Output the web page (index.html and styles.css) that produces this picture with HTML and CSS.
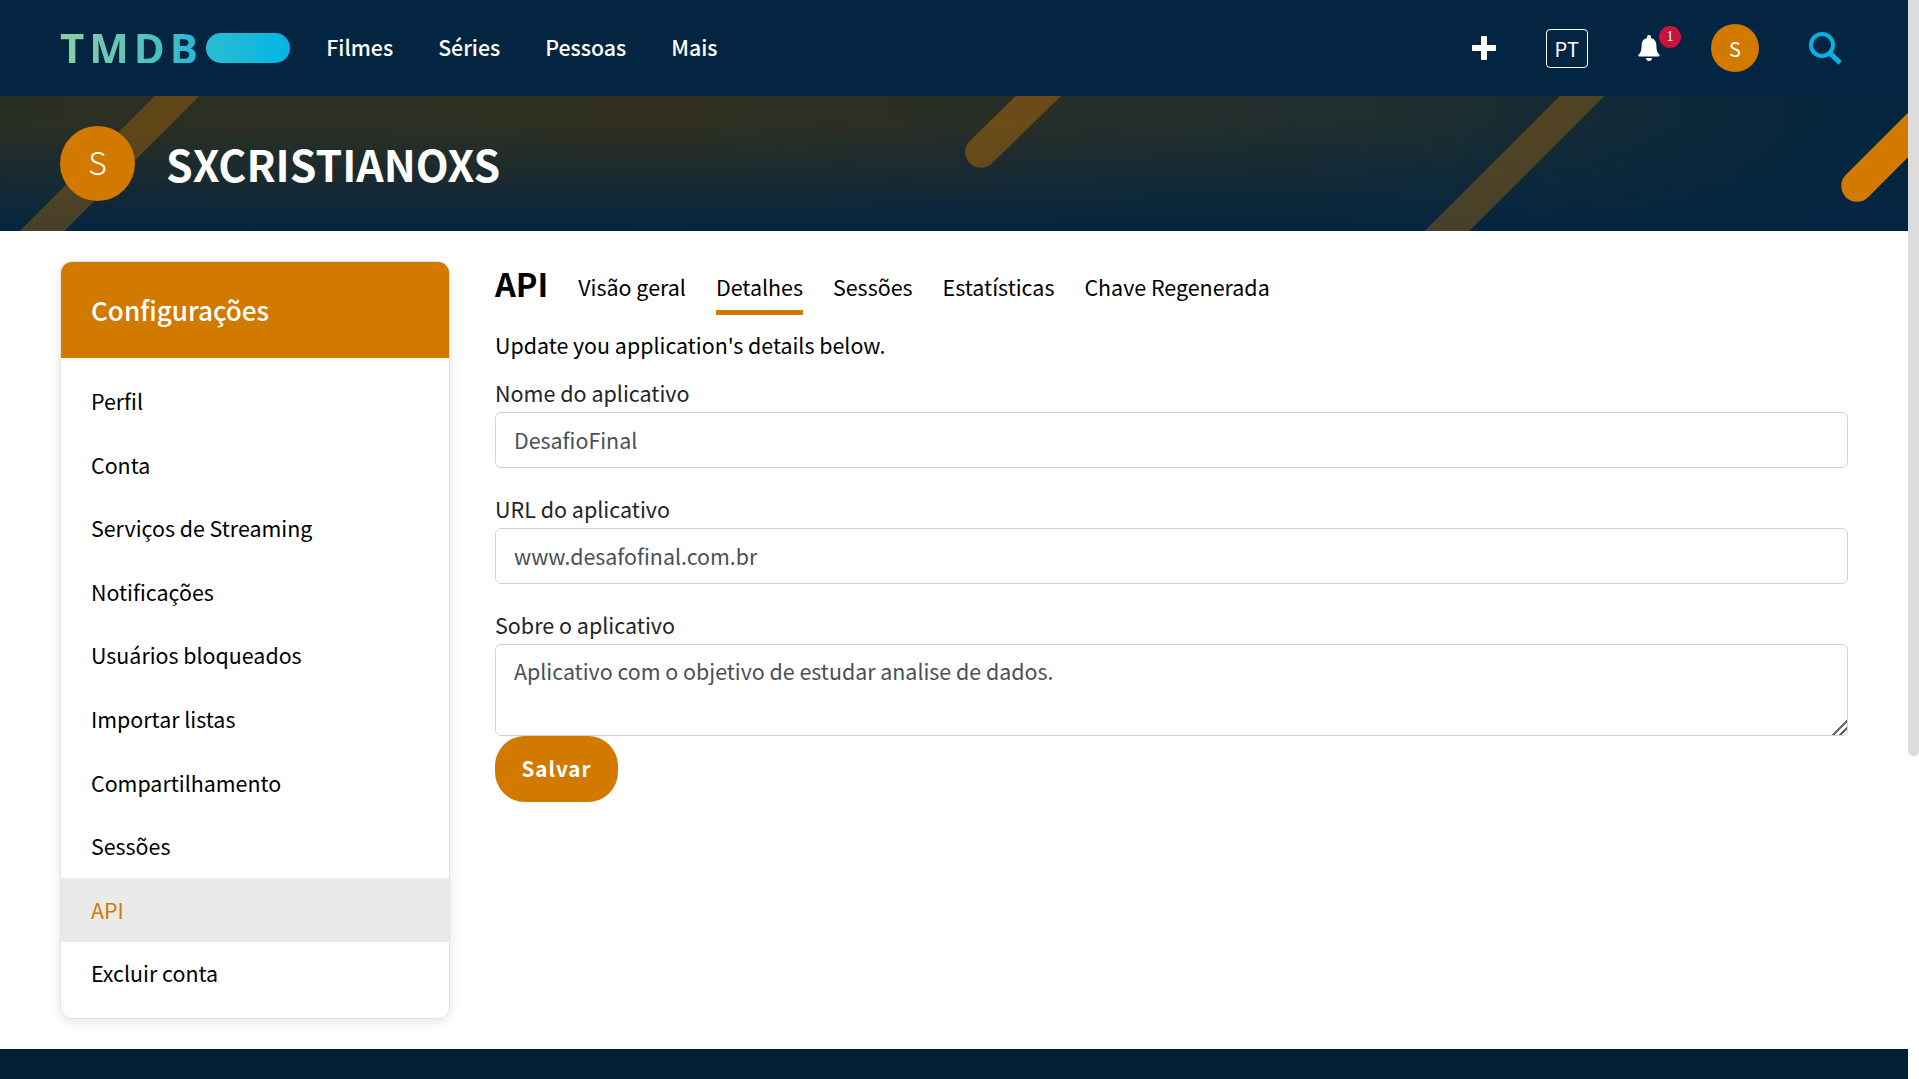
FILE: index.html
```html
<!DOCTYPE html>
<html lang="pt">
<head>
<meta charset="utf-8">
<title>TMDB - API</title>
<link rel="stylesheet" href="styles.css">
</head>
<body>
<div class="window">
  <div class="page">
    <header class="topbar">
      <div class="topbar-left">
        <a class="logo"><span class="logo-text">TMDB</span><span class="logo-pill"></span></a>
        <nav class="main-nav">
          <a>Filmes</a><a>Séries</a><a>Pessoas</a><a>Mais</a>
        </nav>
      </div>
      <div class="topbar-right">
        <svg class="icon-plus" viewBox="0 0 24 24"><path d="M10 0h4a1 1 0 0 1 1 1v8h8a1 1 0 0 1 1 1v4a1 1 0 0 1-1 1h-8v8a1 1 0 0 1-1 1h-4a1 1 0 0 1-1-1v-8H1a1 1 0 0 1-1-1v-4a1 1 0 0 1 1-1h8V1a1 1 0 0 1 1-1z" fill="#fff"/></svg>
        <span class="lang">PT</span>
        <span class="bell-wrap">
          <svg class="icon-bell" viewBox="0 0 22 26"><path d="M11 0c1.200 0 2 .9 2 2v1c3.600.8 5.400 3.800 5.400 7.500 0 5 1 7 3 9.200.6.700.2 1.800-.8 1.800H1.400c-1 0-1.400-1.100-.8-1.800 2-2.200 3-4.200 3-9.200C3.600 6.800 5.400 3.800 9 3V2c0-1.100.8-2 2-2z" fill="#fff"/><path d="M8 23h6c0 1.700-1.300 3-3 3s-3-1.300-3-3z" fill="#fff"/></svg>
          <span class="badge">1</span>
        </span>
        <span class="avatar-small">S</span>
        <svg class="icon-search" viewBox="0 0 33 33"><circle cx="13" cy="13" r="11" fill="none" stroke="#01b4e4" stroke-width="4"/><path d="M21 21L31 31" stroke="#01b4e4" stroke-width="5"/></svg>
      </div>
    </header>

    <section class="hero">
      <svg class="hero-art" viewBox="0 0 1908 135" preserveAspectRatio="none">
        <path class="stripe-a" d="M200 -23L19 158"/>
        <path class="stripe-b" d="M1062 -23L981 56"/>
        <path class="stripe-a" d="M1605 -23L1424 158"/>
        <path class="stripe-c" d="M1960 -13L1857 90"/>
      </svg>
      <div class="hero-content">
        <span class="avatar-large">S</span>
        <h1 class="username">SXCRISTIANOXS</h1>
      </div>
    </section>

    <main class="layout">
      <aside class="side-card">
        <h2 class="side-title">Configurações</h2>
        <ul class="side-list">
          <li>Perfil</li>
          <li>Conta</li>
          <li>Serviços de Streaming</li>
          <li>Notificações</li>
          <li>Usuários bloqueados</li>
          <li>Importar listas</li>
          <li>Compartilhamento</li>
          <li>Sessões</li>
          <li class="active">API</li>
          <li>Excluir conta</li>
        </ul>
      </aside>

      <section class="content">
        <div class="tabs">
          <h2 class="tabs-title">API</h2>
          <a class="tab">Visão geral</a>
          <a class="tab current">Detalhes</a>
          <a class="tab">Sessões</a>
          <a class="tab">Estatísticas</a>
          <a class="tab">Chave Regenerada</a>
        </div>
        <p class="intro">Update you application's details below.</p>
        <form class="form">
          <label class="field">
            <span class="field-label">Nome do aplicativo</span>
            <input class="control" type="text" value="DesafioFinal">
          </label>
          <label class="field">
            <span class="field-label">URL do aplicativo</span>
            <input class="control" type="text" value="www.desafofinal.com.br">
          </label>
          <label class="field field-area">
            <span class="field-label">Sobre o aplicativo</span>
            <textarea class="control area">Aplicativo com o objetivo de estudar analise de dados.</textarea>
          </label>
          <button class="save" type="button">Salvar</button>
        </form>
      </section>
    </main>

    <footer class="footer"></footer>
  </div>
  <div class="scrollbar"><div class="thumb"></div></div>
</div>
</body>
</html>
```

FILE: styles.css
```css
* { box-sizing: border-box; }
html, body { margin: 0; height: 100%; overflow: hidden; }
body {
  font-family: "Noto Sans CJK SC", "Noto Sans", sans-serif;
  color: #000;
  background: #fff;
}
.window { display: flex; height: 1079px; }
.page { flex: 1; min-width: 0; display: flex; flex-direction: column; }

.scrollbar { width: 11px; background: #fff; }
.thumb { height: 756px; background: #dcdcdc; border-radius: 0 0 5px 5px; }

.topbar {
  height: 96px;
  flex: none;
  background: #032541;
  display: flex;
  align-items: center;
  justify-content: space-between;
  padding: 0 66px 0 60px;
}
.topbar-left { display: flex; align-items: center; }
.logo { display: flex; align-items: center; gap: 3.400px; }
.logo-text {
  font-family: "Open Sans", sans-serif;
  font-weight: 700;
  font-size: 42px;
  line-height: 30px;
  letter-spacing: 4.900px;
  background: linear-gradient(90deg, #90cea1, #3cbec9 80%, #1eb6d8);
  -webkit-background-clip: text;
  background-clip: text;
  color: transparent;
}
.logo-pill {
  width: 84px;
  height: 30px;
  border-radius: 15px;
  background: linear-gradient(90deg, #2bbdd0, #02b5e6);
}
.main-nav { display: flex; gap: 45px; margin-left: 36px; margin-top: -2px; }
.main-nav a { color: #fff; font-size: 21.300px; font-weight: 500; line-height: 30px; }

.topbar-right { display: flex; align-items: center; }
.icon-plus { width: 24px; height: 24px; display: block; }
.lang {
  margin-left: 50px;
  width: 42px;
  height: 39px;
  border: 1px solid #fff;
  border-radius: 4px;
  color: #fff;
  font-size: 20px;
  display: flex;
  align-items: center;
  justify-content: center;
  letter-spacing: .5px;
}
.bell-wrap { position: relative; margin-left: 50px; display: block; width: 22px; height: 26px; }
.icon-bell { width: 22px; height: 26px; display: block; }
.badge {
  position: absolute;
  left: 21px;
  top: -9px;
  width: 22px;
  height: 22px;
  border-radius: 50%;
  background: #c8143c;
  color: #fff;
  font-family: "Liberation Serif", serif;
  font-size: 14px;
  display: flex;
  align-items: center;
  justify-content: center;
}
.avatar-small {
  margin-left: 51px;
  width: 48px;
  height: 48px;
  border-radius: 50%;
  background: #d27900;
  color: #fff;
  font-size: 20px;
  display: flex;
  align-items: center;
  justify-content: center;
}
.icon-search { margin-left: 50px; width: 33px; height: 33px; display: block; }

.hero {
  position: relative;
  height: 135px;
  flex: none;
  overflow: hidden;
  background:
    linear-gradient(180deg, rgba(3,37,65,0) 20%, rgba(3,37,65,.95) 100%),
    linear-gradient(90deg, #2a2f25 0%, #302f20 35%, #1d2e30 75%, #03253f 97%);
}
.hero-art { position: absolute; inset: 0; width: 100%; height: 100%; }
.hero-art path { fill: none; stroke-width: 31.500; stroke-linecap: round; }
.stripe-a { stroke: #d27900; opacity: .32; stroke-linecap: butt !important; }
.stripe-b { stroke: #d27900; opacity: .4; }
.stripe-c { stroke: #d27900; }
.hero-content {
  position: relative;
  height: 100%;
  display: flex;
  align-items: center;
  padding: 0 0 0 60px;
}
.avatar-large {
  width: 75px;
  height: 75px;
  border-radius: 50%;
  background: #d27900;
  color: #fff;
  font-size: 32px;
  font-weight: 300;
  line-height: 70px;
  text-align: center;
}
.username {
  margin: 0 0 0 31px;
  color: #fff;
  font-size: 42.800px;
  font-weight: 700;
  line-height: 1;
}

.layout {
  flex: 1;
  min-height: 0;
  display: flex;
  align-items: flex-start;
  gap: 45px;
  padding: 30px 60px 0 60px;
}
.side-card {
  width: 390px;
  flex: none;
  background: #fff;
  border-radius: 12px;
  border: 1px solid #e3e3e3;
  box-shadow: 0 3px 12px rgba(0,0,0,.1);
  overflow: hidden;
  height: 758px;
}
.side-title {
  margin: 0;
  height: 96px;
  padding-left: 30px;
  display: flex;
  align-items: center;
  background: #d27900;
  color: #fff;
  font-size: 26.100px;
  font-weight: 500;
}
.side-list { list-style: none; margin: 0; padding: 11.500px 0 0; }
.side-list li {
  height: 63.600px;
  padding: 0 0 1.500px 30px;
  display: flex;
  align-items: center;
  font-size: 21.400px;
}
.side-list li.active { background: #eaeaea; color: #d27900; }

.content { flex: 1; min-width: 0; padding-top: 1px; }
.tabs { display: flex; align-items: flex-start; height: 53px; }
.tabs-title { margin: -2px 30px 0 0; font-size: 32.500px; font-weight: 700; line-height: 46px; }
.tab {
  margin-right: 30px;
  font-size: 21.450px;
  line-height: 32px;
  height: 53px;
  padding-top: 9px;
}
.tab.current { border-bottom: 5px solid #d27900; }
.intro { margin: 14px 0 0; font-size: 21.400px; line-height: 32px; }
.form { display: flex; flex-direction: column; align-items: flex-start; margin-top: 16px; }
.field { display: block; width: 100%; margin-bottom: 25px; }
.field-area { margin-bottom: 0; }
.field-label { display: block; font-size: 21.500px; line-height: 32px; margin-bottom: 3px; color: #212529; }
.control {
  display: block;
  width: 100%;
  height: 56px;
  padding: 0 18px 2px;
  border: 1.500px solid #ced4da;
  border-radius: 6px;
  background: #fff;
  color: #495057;
  font-family: inherit;
  font-size: 21.400px;
}
.area { height: 92px; padding: 10px 18px 6px; line-height: 32px; }
.area::-webkit-resizer {
  background: linear-gradient(135deg, transparent 50%, #666 50%, #666 58%, transparent 58%, transparent 72%, #666 72%, #666 82%, transparent 82%);
}
.save {
  width: 123px;
  height: 66px;
  padding: 0 0 2px;
  border: 0;
  border-radius: 30px;
  background: #d27900;
  color: #fff;
  font-family: inherit;
  font-size: 20.600px;
  font-weight: 700;
  letter-spacing: 1px;
}

.footer { height: 30px; flex: none; background: #031f35; }
```
